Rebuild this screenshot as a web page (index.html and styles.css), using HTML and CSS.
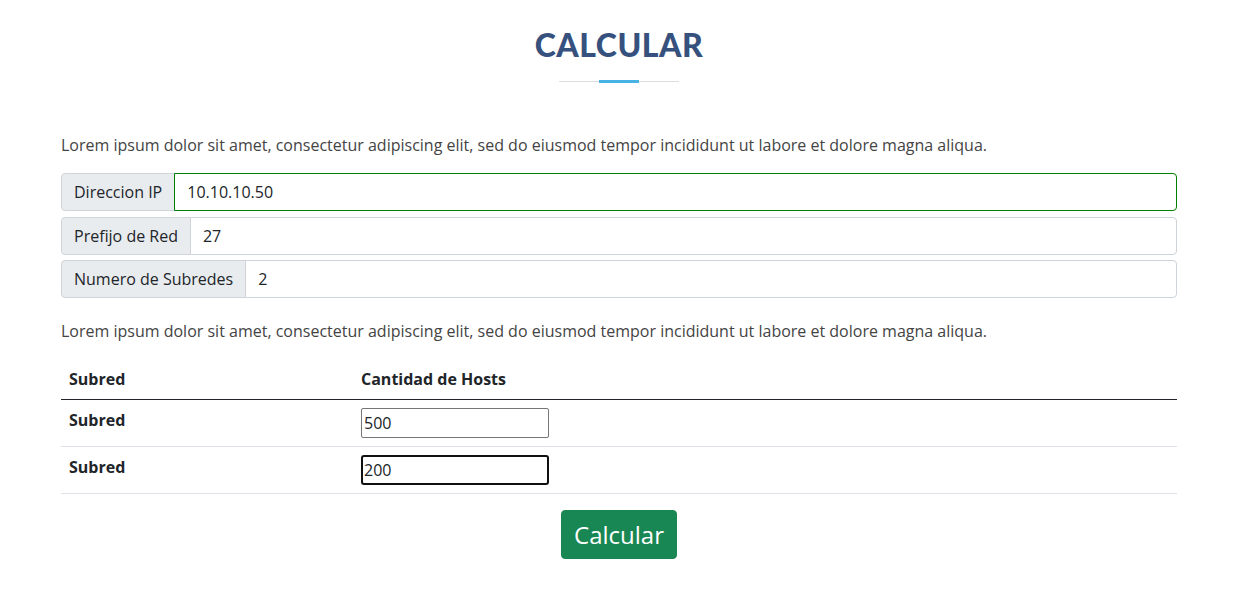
FILE: index.html
```html
<!DOCTYPE html>
<html lang="es">
<head>
<meta charset="utf-8">
<title>Calcular</title>
<link rel="stylesheet" href="styles.css">
</head>
<body>
<main class="container">
  <header class="section-title">
    <h2>Calcular</h2>
    <div class="title-rule"></div>
  </header>

  <p class="lead-text">Lorem ipsum dolor sit amet, consectetur adipiscing elit, sed do eiusmod tempor incididunt ut labore et dolore magna aliqua.</p>

  <div class="input-group">
    <span class="input-label">Direccion IP</span>
    <input class="input-field valid" type="text" value="10.10.10.50">
  </div>
  <div class="input-group">
    <span class="input-label">Prefijo de Red</span>
    <input class="input-field" type="text" value="27">
  </div>
  <div class="input-group">
    <span class="input-label">Numero de Subredes</span>
    <input class="input-field" type="text" value="2">
  </div>

  <p class="lead-text second">Lorem ipsum dolor sit amet, consectetur adipiscing elit, sed do eiusmod tempor incididunt ut labore et dolore magna aliqua.</p>

  <table class="hosts-table">
    <thead>
      <tr><th class="col-subred">Subred</th><th>Cantidad de Hosts</th></tr>
    </thead>
    <tbody>
      <tr><th>Subred</th><td><input class="host-input" type="text" value="500"></td></tr>
      <tr><th>Subred</th><td><input class="host-input focused" type="text" value="200"></td></tr>
    </tbody>
  </table>

  <div class="actions">
    <button class="btn-calc" type="button">Calcular</button>
  </div>
</main>
</body>
</html>
```

FILE: styles.css
```css
* { box-sizing: border-box; }

body {
  margin: 0;
  background: #fff;
  font-family: "Open Sans", "Liberation Sans", sans-serif;
  font-size: 16px;
  line-height: 24px;
  color: #444444;
}

.container {
  width: 1116px;
  margin-left: 61px;
  padding-top: 26px;
}

.section-title {
  display: flex;
  flex-direction: column;
  align-items: center;
}

.section-title h2 {
  margin: 0;
  font-family: "Lato", "Open Sans", sans-serif;
  font-weight: 900;
  font-size: 32px;
  line-height: 38px;
  text-transform: uppercase;
  letter-spacing: 0.5px;
  color: #37517e;
}

.title-rule {
  margin-top: 16px;
  width: 120px;
  height: 3px;
  background:
    linear-gradient(#47b2e4, #47b2e4) center / 40px 3px no-repeat,
    linear-gradient(#dddddd, #dddddd) center / 120px 1px no-repeat;
}

.lead-text {
  margin: 50px 0 16px;
}

.lead-text.second {
  margin: 21px 0 16px;
}

.input-group {
  display: flex;
  height: 38px;
  margin-bottom: 5.5px;
}

.input-label {
  display: flex;
  align-items: center;
  padding: 0 12px;
  background: #e9ecef;
  border: 1px solid #ced4da;
  border-radius: 4px 0 0 4px;
  color: #212529;
  white-space: nowrap;
}

.input-field {
  flex: 1;
  min-width: 0;
  margin-left: -1px;
  padding: 0 12px;
  border: 1px solid #ced4da;
  border-radius: 0 4px 4px 0;
  font-family: inherit;
  font-size: 16px;
  color: #212529;
  background: #fff;
  outline: none;
}

.input-field.valid {
  border-color: #008000;
  position: relative;
}

.hosts-table {
  width: 100%;
  border-collapse: collapse;
  color: #212529;
}

.hosts-table th,
.hosts-table td {
  padding: 8px;
  text-align: left;
  vertical-align: top;
  border-bottom: 1px solid #dee2e6;
  font-weight: 700;
}

.hosts-table thead th {
  border-bottom: 1px solid #212529;
  vertical-align: bottom;
}

.col-subred { width: 292px; }

.host-input {
  display: block;
  width: 188px;
  height: 30px;
  padding: 0 2px;
  border: 1px solid #767676;
  border-radius: 2px;
  font-family: "Open Sans", sans-serif;
  font-size: 16px;
  font-weight: 400;
  color: #212529;
  background: #fff;
  outline: none;
}

.host-input.focused {
  border: 2px solid #101010;
  border-radius: 3px;
  padding: 0 1px;
}

.actions {
  display: flex;
  justify-content: center;
  padding-top: 16px;
}

.btn-calc {
  background: #198754;
  color: #fff;
  border: 1px solid #198754;
  border-radius: 4px;
  font-family: "Open Sans", sans-serif;
  font-size: 24px;
  line-height: 35px;
  padding: 6px 12px;
  cursor: pointer;
}
```
